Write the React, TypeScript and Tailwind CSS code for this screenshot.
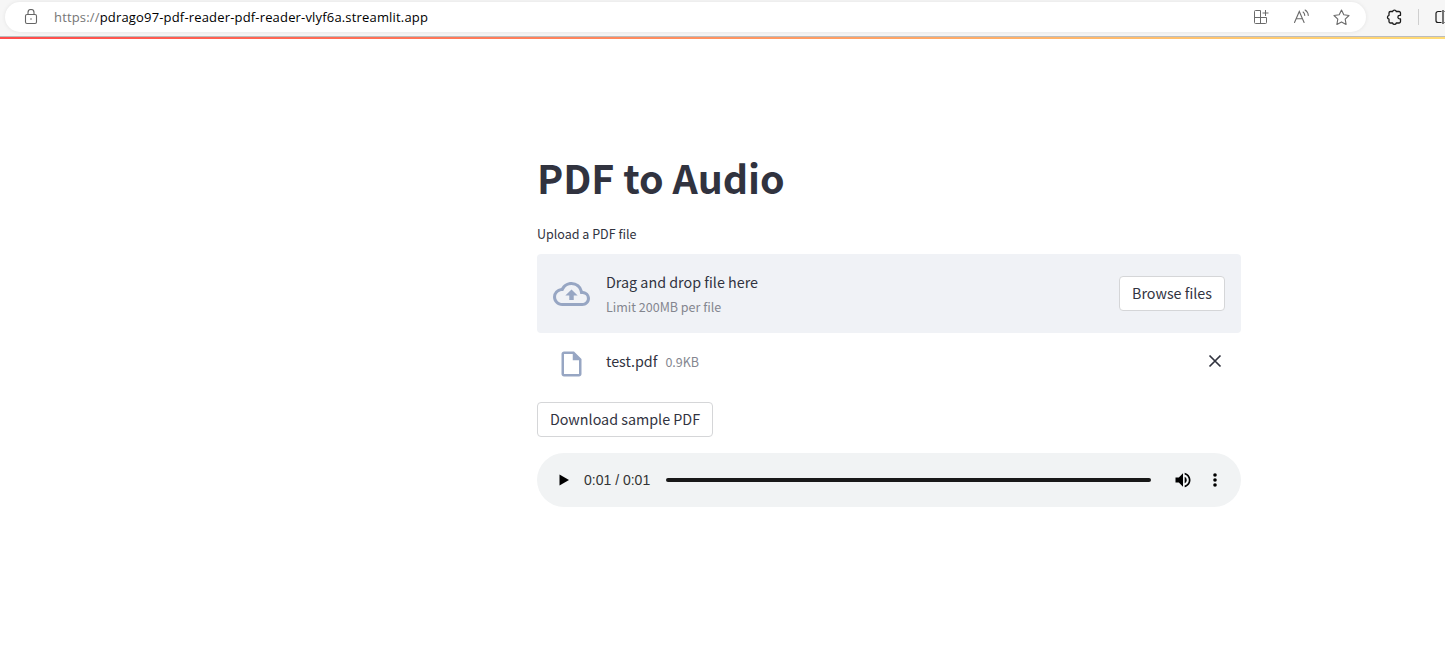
import type { ReactNode } from 'react';

const SANS = "font-['Noto_Sans_CJK_SC','Noto_Sans',sans-serif]";

function Button({ children, className }: { children: ReactNode; className: string }) {
  return (
    <button
      className={`flex h-[35px] items-center justify-center whitespace-nowrap rounded border border-[#d5d6d8] bg-white text-[14.32px] leading-none text-[#31333f] ${className}`}
    >
      {children}
    </button>
  );
}

function BrowserBar() {
  return (
    <header className="flex h-[37px] items-start overflow-hidden border-b border-[#bcbcbc] bg-[#f6f6f6]">
      <div className="ml-[5px] mt-[2px] flex h-[30px] w-[1361px] shrink-0 items-center rounded-full bg-white shadow-[0_0_4px_rgba(0,0,0,0.08)]">
        <svg className="ml-[19px] h-4 w-[14px] shrink-0" viewBox="0 0 14 16" fill="none" stroke="#666" strokeWidth="1.1">
          <rect x="1.5" y="5.5" width="11" height="9" rx="1.5" />
          <path d="M4 5.5V3.5a3 3 0 0 1 6 0v2" />
          <circle cx="7" cy="10" r="0.8" fill="#666" stroke="none" />
        </svg>
        <div className="ml-4 w-[400px] whitespace-nowrap font-['Open_Sans','Noto_Sans',sans-serif] text-[13px] leading-5 tracking-[0.17px] text-black">
          <span className="text-[#767676]">https://</span>pdrago97-pdf-reader-pdf-reader-vlyf6a.streamlit.app
        </div>
        <div className="ml-auto mr-4 flex items-center text-[#6b6b6b]">
          <svg className="h-4 w-4" viewBox="0 0 16 16" fill="none" stroke="currentColor" strokeWidth="1">
            <path d="M7.5 1.5h-5a1 1 0 0 0-1 1v11a1 1 0 0 0 1 1h10a1 1 0 0 0 1-1v-5h-12M7.5 1.5v13M12.5 1v6M9.5 4h6" />
          </svg>
          <svg className="ml-[25px] h-4 w-4" viewBox="0 0 16 16" fill="none" stroke="currentColor" strokeWidth="1.1" strokeLinecap="round">
            <path d="M.5 13.5 5.3 2.5 10.1 13.5M2.2 9.8h6.2M9.1 3c1 .8 1.6 2 1.7 3.5M11.1 1c1.900 1.200 3 3.100 3.200 5.500" />
          </svg>
          <svg className="ml-[23px] h-[17px] w-[17px]" viewBox="0 0 17 17" fill="none" stroke="currentColor" strokeWidth="1.1" strokeLinejoin="round">
            <path d="M8.500 1 10.800 5.800 16 6.500 12.200 10.200 13.100 15.400 8.500 12.900 3.900 15.400 4.800 10.200 1 6.500 6.200 5.800z" />
          </svg>
        </div>
      </div>
      <svg className="ml-[19px] mt-2 h-[18px] w-[18px] shrink-0" viewBox="0 0 18 18" fill="none" stroke="#1b1b1b" strokeWidth="1.3" strokeLinejoin="round">
        <path d="M5.500 3.500H7.600A1.900 1.900 0 0 1 11.300 3.500H14A1.500 1.500 0 0 1 15.500 5V7.300H14.700A1.800 1.800 0 0 0 14.700 10.900H15.500V13.500A1.500 1.500 0 0 1 14 15H11.300A1.900 1.900 0 0 1 7.600 15H5.500A1.500 1.500 0 0 1 4 13.500V11.200A2 2 0 0 1 4 7.300V5A1.500 1.500 0 0 1 5.500 3.500z" />
      </svg>
      <div className="ml-[15px] mt-[9px] h-4 w-px shrink-0 bg-[#cfcfcf]" />
      <svg className="ml-4 mt-[9px] h-4 w-4 shrink-0" viewBox="0 0 16 16" fill="none" stroke="#1b1b1b" strokeWidth="1.2">
        <path d="M6.500 2.500H3A2 2 0 0 0 1 4.500v7a2 2 0 0 0 2 2h3.500M8 1v14M9.500 2.500h3a2 2 0 0 1 2 2v7a2 2 0 0 1-2 2h-3" />
      </svg>
    </header>
  );
}

function Uploader() {
  return (
    <section>
      <div className="flex h-[79px] items-center rounded bg-[#f0f2f6] px-4">
        <svg className="h-9 w-[37px] shrink-0" viewBox="0 0 24 24" preserveAspectRatio="none" fill="#97a6c3">
          <path d="M19.35 10.04A7.49 7.49 0 0 0 12 4C9.110 4 6.600 5.640 5.350 8.040A5.994 5.994 0 0 0 0 14c0 3.310 2.690 6 6 6h13c2.760 0 5-2.240 5-5 0-2.640-2.050-4.780-4.650-4.960zM19 18H6c-2.210 0-4-1.790-4-4 0-2.050 1.530-3.760 3.560-3.970l1.070-.11.5-.95A5.469 5.469 0 0 1 12 6c2.620 0 4.880 1.860 5.390 4.430l.3 1.500 1.530.11A2.980 2.980 0 0 1 22 15c0 1.650-1.350 3-3 3zM8 13h2.550v3h2.900v-3H16l-4-4z" />
        </svg>
        <div className="ml-4 flex flex-col">
          <span className="text-[14.32px] leading-[26px] text-[#31333f]">Drag and drop file here</span>
          <span className="text-[12.53px] leading-[24px] text-[#84868f]">Limit 200MB per file</span>
        </div>
        <Button className="ml-auto w-[106px]">Browse files</Button>
      </div>
      <div className="flex h-[60px] items-center pl-4 pr-[18px]">
        <div className="flex w-[37px] shrink-0 justify-center">
          <svg className="mt-px h-[30px] w-[31px]" viewBox="0 0 24 24" fill="#97a6c3">
            <path d="M14 2H6c-1.100 0-1.990.9-1.990 2L4 20c0 1.100.89 2 1.990 2H18c1.100 0 2-.9 2-2V8l-6-6zM6 20V4h7v5h5v11H6z" />
          </svg>
        </div>
        <div className="ml-4 flex items-baseline gap-2 pb-1">
          <span className="text-[14.32px] leading-6 text-[#31333f]">test.pdf</span>
          <span className="text-[12.53px] leading-6 text-[#84868f]">0.9KB</span>
        </div>
        <svg className="mb-1 ml-auto h-4 w-4" viewBox="0 0 16 16" fill="none" stroke="#31333f" strokeWidth="1.700">
          <path d="m2.500 2.500 11 11m0-11-11 11" />
        </svg>
      </div>
    </section>
  );
}

function AudioPlayer() {
  return (
    <div className="mt-4 flex h-[54px] items-center rounded-full bg-[#f1f3f4]">
      <svg className="ml-[22px] h-3 w-[10px] shrink-0" viewBox="0 0 10 12">
        <path d="M.5.5v11L10 6z" fill="#000" />
      </svg>
      <span className="ml-[15px] whitespace-nowrap font-['Liberation_Sans',sans-serif] text-[14px] leading-5 text-[#333]">0:01 / 0:01</span>
      <div className="ml-4 h-1 w-[485px] rounded-full bg-[#181818]" />
      <svg className="ml-[22px] h-5 w-5 shrink-0" viewBox="0 0 24 24" fill="#000">
        <path d="M3 9v6h4l5 5V4L7 9H3zm13.500 3A4.500 4.500 0 0 0 14 7.970v8.050c1.480-.73 2.500-2.250 2.500-4.020zM14 3.230v2.060c2.890.86 5 3.540 5 6.710s-2.110 5.850-5 6.710v2.060c4.010-.91 7-4.490 7-8.770s-2.990-7.860-7-8.770z" />
      </svg>
      <svg className="ml-3 h-5 w-5 shrink-0" viewBox="0 0 20 20" fill="#000">
        <circle cx="10" cy="5" r="1.800" />
        <circle cx="10" cy="10" r="1.800" />
        <circle cx="10" cy="15" r="1.800" />
      </svg>
    </div>
  );
}

export default function App() {
  return (
    <div className="h-[662px] w-[1445px] overflow-hidden bg-white">
      <BrowserBar />
      <div className="h-0.5 bg-[linear-gradient(90deg,#ff4b4b,#fffd80)] bg-[length:1778px_2px]" />
      <main className={`ml-[537px] w-[704px] pt-[111px] ${SANS}`}>
        <h1 className="h-[53px] whitespace-nowrap text-[39.4px] font-bold leading-[53px] tracking-[-0.03px] text-[#31333f]">PDF to Audio</h1>
        <p className="mb-[8px] mt-[19px] h-6 text-[12.53px] leading-6 text-[#31333f]">Upload a PDF file</p>
        <Uploader />
        <Button className="mt-[9px] w-[176px]">Download sample PDF</Button>
        <AudioPlayer />
      </main>
    </div>
  );
}
